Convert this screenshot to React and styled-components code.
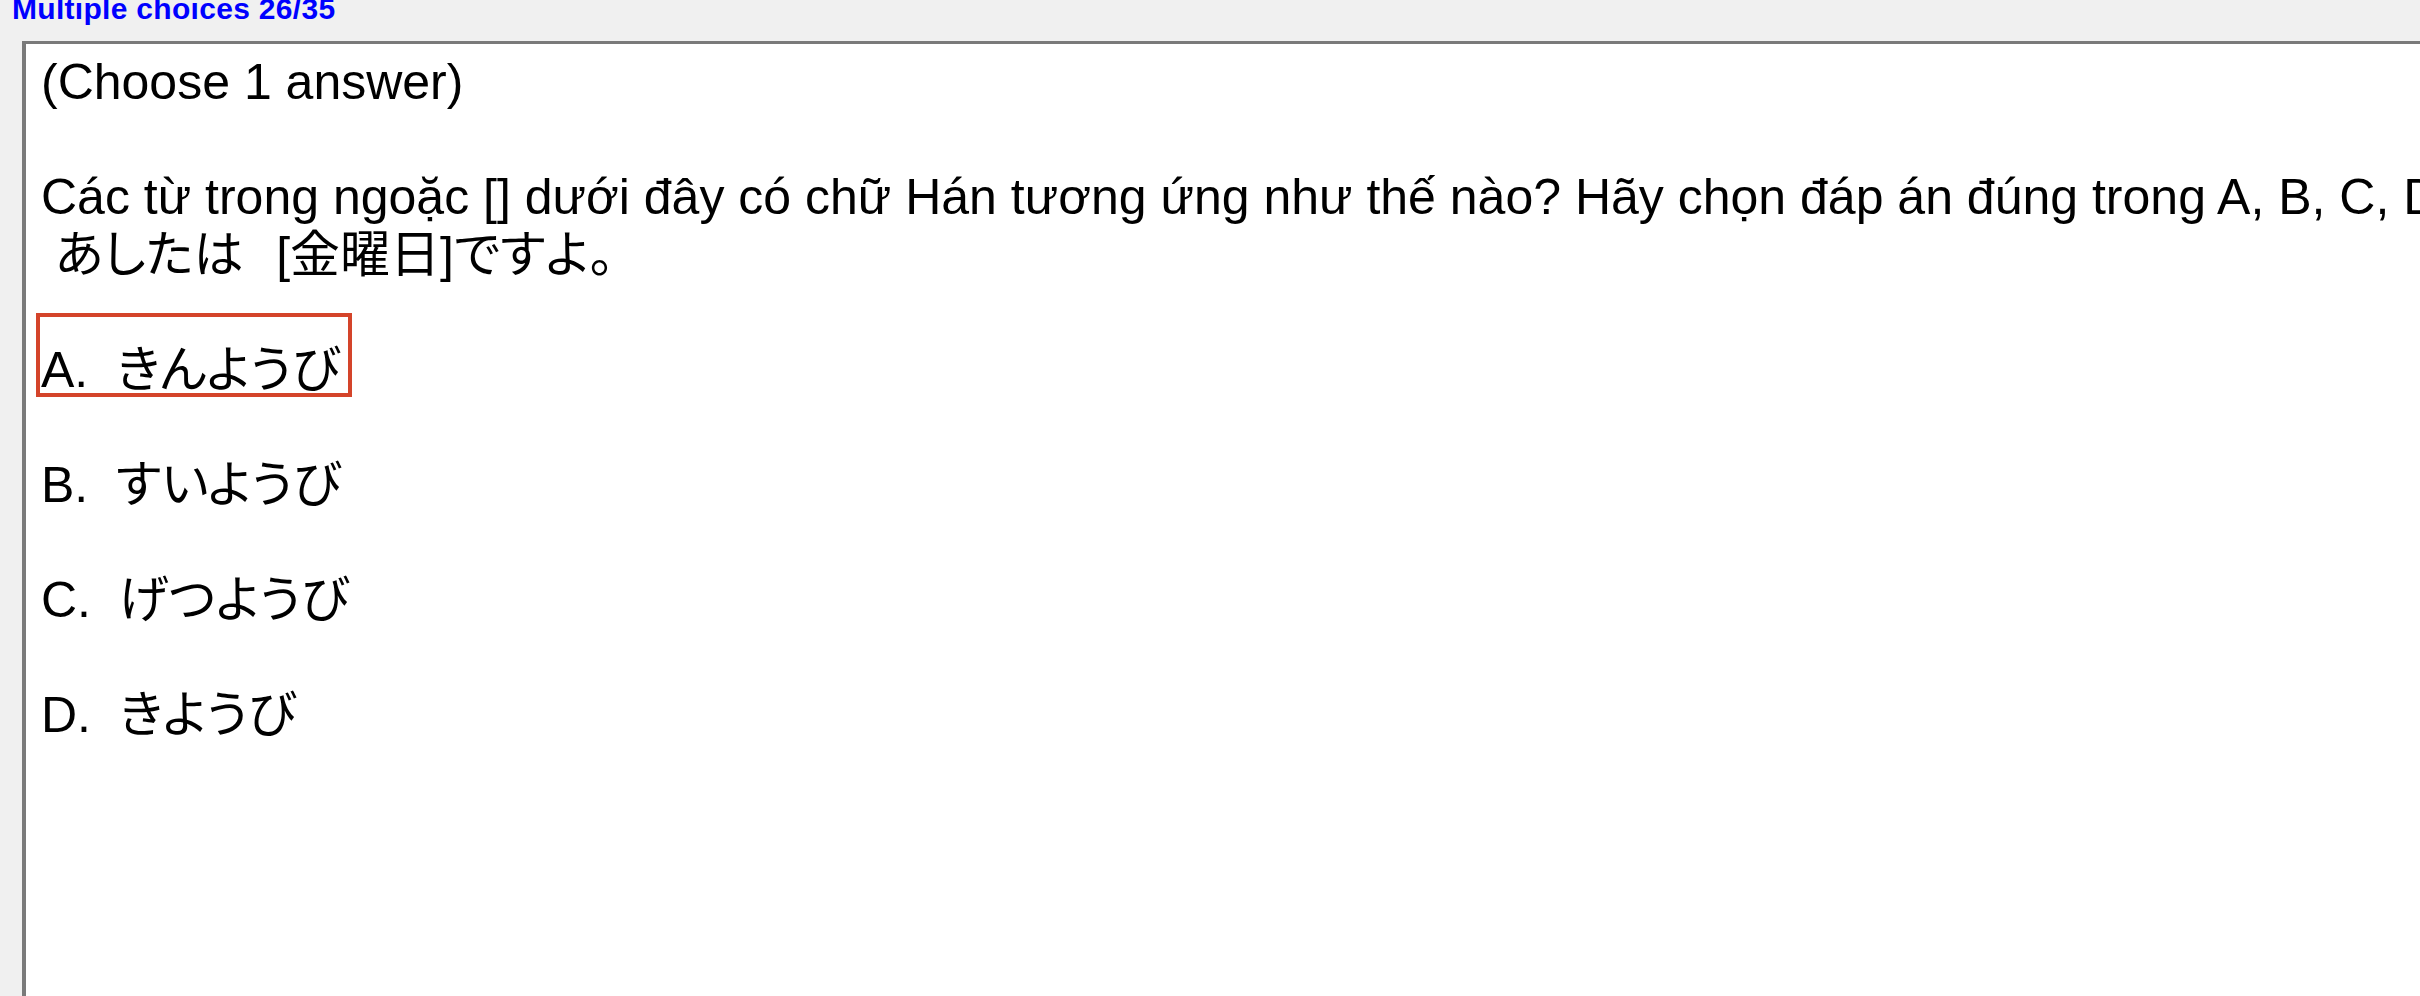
import React from "react";
import styled, { createGlobalStyle, css } from "styled-components";

const Global = createGlobalStyle`
  html, body { margin: 0; padding: 0; background: #f0f0f0; overflow: hidden; }
  #root { width: 2420px; height: 996px; overflow: hidden; }
`;

const Screen = styled.div`
  width: 2420px;
  height: 996px;
  overflow: hidden;
  background: #f0f0f0;
  display: flex;
  flex-direction: column;
  font-family: "Liberation Sans", Arial, "Noto Sans CJK JP", sans-serif;
`;

const Header = styled.div`
  flex: none;
  height: 41px;
  padding-left: 12px;
  font-weight: 700;
  font-size: 30px;
  line-height: 18px;
  letter-spacing: 0.3px;
  color: #0000ff;
  white-space: nowrap;
`;

const Panel = styled.div`
  flex: 1;
  margin-left: 22px;
  margin-right: -60px;
  margin-bottom: -60px;
  background: #ffffff;
  border-top: 3px solid #7a7a7a;
  border-left: 4px solid #7a7a7a;
  padding: 10px 0 0 15px;
  font-size: 50px;
  line-height: 57.5px;
  color: #000000;
  white-space: pre;
`;

const Paragraph = styled.div`
  margin-bottom: 57.5px;
`;

const Line = styled.div`
  height: 57.5px;
`;

const Jp = styled.span`
  font-family: "Noto Sans CJK JP", sans-serif;
  font-feature-settings: "palt";
  line-height: 40px;
`;

const Bracket = styled.span`
  font-family: "Liberation Sans", Arial, sans-serif;
  margin-left: ${(p) => p.$gap || 0}px;
`;

const OptionList = styled.div`
  display: flex;
  flex-direction: column;
`;

const Option = styled.div`
  position: relative;
  height: 57.5px;
  margin-bottom: 57.5px;
  ${(p) =>
    p.$selected &&
    css`
      &::before {
        content: "";
        position: absolute;
        left: -5px;
        top: -28.5px;
        width: 316px;
        height: 84px;
        box-sizing: border-box;
        border: 4px solid #d4442a;
      }
    `}
`;

const options = [
  { key: "A", text: "きんようび", selected: true },
  { key: "B", text: "すいようび" },
  { key: "C", text: "げつようび" },
  { key: "D", text: "きようび" },
];

export default function App() {
  return (
    <>
      <Global />
      <Screen>
        <Header>Multiple choices 26/35</Header>
        <Panel>
          <Paragraph>(Choose 1 answer)</Paragraph>
          <Paragraph>
            <Line>
              Các từ trong ngoặc [] dưới đây có chữ Hán tương ứng như thế nào? Hãy chọn đáp án đúng trong A, B, C, D
            </Line>
            <Line>
              {" "}
              <Jp>あしたは</Jp>
              {"  "}
              <Bracket $gap={5}>[</Bracket>
              <Jp>金曜日</Jp>
              <Bracket>]</Bracket>
              <Jp>ですよ。</Jp>
            </Line>
          </Paragraph>
          <OptionList>
            {options.map((o) => (
              <Option key={o.key} $selected={o.selected}>
                {o.key}.{"  "}
                <Jp>{o.text}</Jp>
              </Option>
            ))}
          </OptionList>
        </Panel>
      </Screen>
    </>
  );
}
